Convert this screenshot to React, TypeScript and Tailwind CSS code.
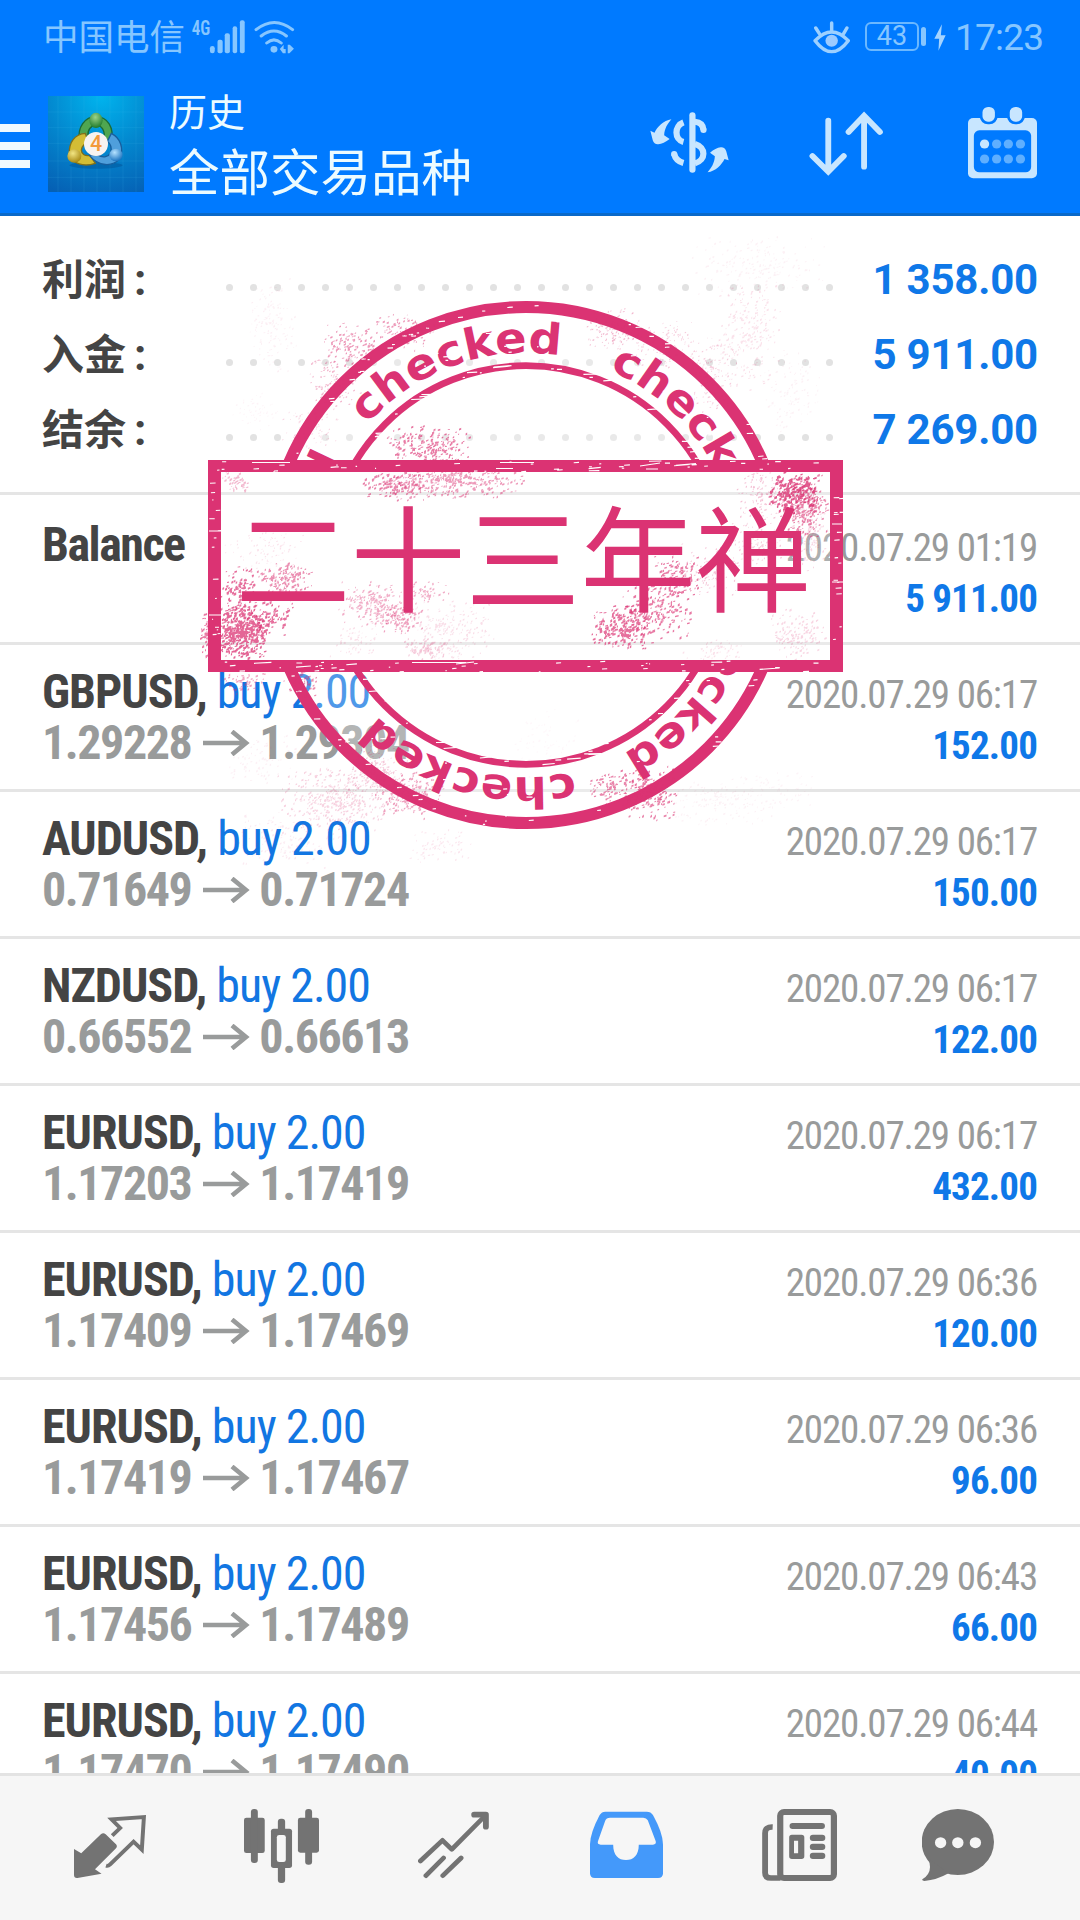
import React from "react";

const PINK = "#db3373";

const summary = [
  { label: "利润", value: "1 358.00" },
  { label: "入金", value: "5 911.00" },
  { label: "结余", value: "7 269.00" },
];

const deals = [
  { symbol: "GBPUSD", open: "1.29228", close: "1.29304", time: "2020.07.29 06:17", profit: "152.00" },
  { symbol: "AUDUSD", open: "0.71649", close: "0.71724", time: "2020.07.29 06:17", profit: "150.00" },
  { symbol: "NZDUSD", open: "0.66552", close: "0.66613", time: "2020.07.29 06:17", profit: "122.00" },
  { symbol: "EURUSD", open: "1.17203", close: "1.17419", time: "2020.07.29 06:17", profit: "432.00" },
  { symbol: "EURUSD", open: "1.17409", close: "1.17469", time: "2020.07.29 06:36", profit: "120.00" },
  { symbol: "EURUSD", open: "1.17419", close: "1.17467", time: "2020.07.29 06:36", profit: "96.00" },
  { symbol: "EURUSD", open: "1.17456", close: "1.17489", time: "2020.07.29 06:43", profit: "66.00" },
  { symbol: "EURUSD", open: "1.17470", close: "1.17490", time: "2020.07.29 06:44", profit: "40.00" },
];

// seeded so the stamp looks the same on every render
let seed = 7;
const rnd = () => {
  seed = (seed * 16807) % 2147483647;
  return seed / 2147483647;
};
const spread = () => rnd() + rnd() - 1;

// x, y, rx, ry, count, dot size, opacity
const clusters = [
  [350, 345, 28, 22, 130, 1.6, 0.5],
  [402, 332, 32, 20, 110, 1.5, 0.5],
  [335, 380, 28, 28, 130, 1.3, 0.35],
  [310, 425, 30, 30, 100, 1.2, 0.2],
  [272, 325, 26, 50, 150, 1.3, 0.08],
  [255, 410, 24, 24, 60, 1.2, 0.06],
  [612, 330, 28, 22, 150, 1.2, 0.35],
  [665, 345, 40, 28, 120, 1.2, 0.25],
  [712, 375, 28, 40, 150, 1.2, 0.25],
  [748, 335, 34, 56, 240, 1.5, 0.15],
  [760, 265, 70, 34, 200, 1.4, 0.07],
  [790, 390, 34, 44, 110, 1.4, 0.07],
  [430, 447, 46, 22, 230, 1.7, 0.65],
  [448, 480, 78, 22, 420, 1.7, 0.5],
  [392, 484, 34, 18, 100, 1.9, 0.6],
  [236, 482, 17, 14, 60, 1.5, 0.35],
  [792, 490, 28, 26, 190, 2.2, 0.8],
  [804, 507, 25, 34, 260, 1.7, 0.6],
  [760, 495, 26, 34, 140, 1.3, 0.3],
  [808, 535, 21, 40, 120, 1.5, 0.2],
  [755, 545, 30, 24, 100, 1.3, 0.25],
  [241, 632, 32, 28, 480, 2, 0.75],
  [206, 634, 7, 24, 50, 1.7, 0.65],
  [238, 588, 20, 24, 100, 1.8, 0.7],
  [286, 580, 30, 20, 150, 1.8, 0.55],
  [265, 548, 42, 22, 90, 1.2, 0.15],
  [270, 615, 24, 20, 80, 2, 0.7],
  [375, 604, 38, 24, 220, 1.6, 0.4],
  [400, 618, 24, 20, 110, 1.7, 0.45],
  [425, 592, 26, 14, 60, 1.5, 0.4],
  [450, 630, 46, 32, 230, 1.4, 0.16],
  [425, 650, 22, 14, 80, 1.7, 0.25],
  [355, 642, 26, 20, 60, 1.4, 0.15],
  [620, 627, 32, 26, 200, 2, 0.7],
  [655, 612, 36, 28, 200, 1.9, 0.65],
  [676, 578, 26, 24, 110, 1.9, 0.65],
  [712, 570, 34, 28, 110, 1.3, 0.3],
  [798, 634, 31, 28, 150, 1.6, 0.2],
  [715, 650, 34, 14, 60, 1.4, 0.15],
  [245, 681, 26, 14, 50, 1.7, 0.45],
  [303, 682, 20, 20, 60, 1.8, 0.55],
  [335, 800, 62, 34, 420, 1.5, 0.22],
  [375, 770, 34, 32, 200, 1.3, 0.28],
  [410, 795, 36, 24, 220, 1.6, 0.45],
  [290, 840, 60, 30, 130, 1.5, 0.1],
  [440, 845, 34, 18, 70, 1.5, 0.12],
  [260, 760, 40, 30, 80, 1.5, 0.08],
  [612, 788, 26, 18, 90, 1.7, 0.6],
  [648, 788, 30, 24, 130, 1.7, 0.65],
  [648, 806, 30, 18, 60, 1.9, 0.6],
  [720, 800, 60, 28, 160, 1.4, 0.07],
  [780, 790, 40, 20, 60, 1.4, 0.06],
  [545, 745, 40, 40, 80, 1.4, 0.04],
].map(([cx, cy, rx, ry, count, size, opacity]) => {
  let d = "";
  for (let i = 0; i < count; i++) {
    const w = size * (0.5 + rnd());
    const h = size * (0.5 + rnd());
    const x = cx + spread() * rx;
    const y = cy + spread() * ry;
    d += `M${x.toFixed(1)} ${y.toFixed(1)}l${w.toFixed(1)} ${(-h / 2).toFixed(1)}v${h.toFixed(1)}l${(-w).toFixed(1)} ${(h / 3).toFixed(1)}z`;
  }
  return { d, opacity };
});

const dash = (x: number, y: number, w: number) =>
  `M${x.toFixed(1)} ${y.toFixed(1)}l${w.toFixed(1)} ${(-w * 0.1 * rnd()).toFixed(1)}`;

let ringScratches = "";
for (let i = 0; i < 210; i++) {
  const a = rnd() * Math.PI * 2;
  const r = i % 3 === 0 ? 199 + spread() * 4 : i % 3 === 1 ? 258 + spread() * 7 : 228 + spread() * 18;
  ringScratches += dash(526 + Math.cos(a) * r, 565 + Math.sin(a) * r, i % 6 === 0 ? 10 + rnd() * 8 : 1.5 + rnd() * 5);
}

let frameScratches = "";
for (let i = 0; i < 90; i++) {
  const top = i % 2 === 0;
  frameScratches += dash(215 + rnd() * 610, (top ? 461 : 661) + rnd() * 11, i % 9 === 0 ? 10 + rnd() * 12 : 1 + rnd() * 5);
}
for (let i = 0; i < 30; i++) {
  frameScratches += dash((i % 2 ? 209 : 831) + rnd() * 9, 475 + rnd() * 180, 1 + rnd() * 5);
}
frameScratches += "M252 462.5h38M500 462.5h34M496 468.5h17M640 466l20 -3M646 469h12M412 662.5h54M456 664l18 -2M209 531h12M209 615h12M832 524h10M832 582h11";

const Stamp: React.FC = () => (
  <svg className="absolute left-0 top-0 pointer-events-none" width="1080" height="1920" viewBox="0 0 1080 1920">
    <defs>
      <clipPath id="outside-frame">
        <path d="M0 0H1080V461H0zM0 671H1080V1920H0z" />
      </clipPath>
      <path id="ring-text" d="M526 353a212 212 0 0 1 0 424a212 212 0 0 1 0 -424" />
    </defs>
    <g clipPath="url(#outside-frame)">
      <circle cx="526" cy="565" r="258" fill="#fff" fillOpacity="0.26" stroke={PINK} strokeWidth="12" />
      <circle cx="526" cy="565" r="199.3" fill="none" stroke={PINK} strokeWidth="6.8" />
      {[-48.5, 23, 95, 167, 242].map((angle) => (
        <text
          key={angle}
          transform={`rotate(${angle} 526 565)`}
          fill={PINK}
          fontFamily="'DejaVu Sans', sans-serif"
          fontWeight="700"
          fontSize="43"
        >
          <textPath href="#ring-text" textLength="214" lengthAdjust="spacingAndGlyphs">checked</textPath>
        </text>
      ))}
      <path d={ringScratches} stroke="#fff" strokeWidth="1.2" fill="none" />
    </g>
    <rect x="214.5" y="466" width="622" height="200" fill="#fff" fillOpacity="0.2" />
    {clusters.map((c, i) => (
      <path key={i} d={c.d} fill={PINK} fillOpacity={c.opacity} />
    ))}
    <path d="M208 460H843V672H208zM221 472V660H830V472z" fill={PINK} fillRule="evenodd" />
    <path d={frameScratches} stroke="#fff" strokeWidth="1.1" fill="none" />
    <text x="235.5" y="603" fill={PINK} fontFamily="'Noto Sans CJK SC', sans-serif" fontSize="115">二十三年禅</text>
  </svg>
);

const StatusBar: React.FC = () => (
  <div className="flex h-[75px] items-center text-[#86c6ff]">
    <span className="ml-[43px] -mt-[5px] text-[35.5px] leading-none font-['Noto_Sans_CJK_SC',sans-serif]">中国电信</span>
    <svg className="ml-[6px] -mt-[3px]" width="105" height="37" viewBox="555 50 305 111" preserveAspectRatio="none" fill="currentColor">
      <text x="557" y="102" fontFamily="'Roboto Condensed', sans-serif" fontWeight="600" fontSize="62" textLength="54" lengthAdjust="spacingAndGlyphs">4G</text>
      <rect x="610" y="134" width="14" height="22" rx="7" />
      <rect x="632" y="115" width="15" height="41" rx="6" />
      <rect x="653" y="96" width="15" height="60" rx="6" />
      <rect x="676" y="75" width="13" height="81" rx="6" />
      <rect x="697" y="57" width="14" height="99" rx="6" />
      <circle cx="796" cy="144" r="10" />
      <path d="M744 85Q797 42 850 85M759 104Q796 74 832 104M775 125Q796 106 817 125" fill="none" stroke="currentColor" strokeWidth="9" strokeLinecap="round" />
      <path d="M813 143L824 130V143H830V156H822zM836 130H842L854 142L841 156H836z" />
    </svg>
    <svg className="ml-auto -mt-[2px]" width="37" height="34" viewBox="791 58 107 102" preserveAspectRatio="none">
      <path d="M797 120Q845 68 893 120Q845 186 797 120zM845 67V90M799 82L809 98M889 82L880 98" fill="none" stroke="#9dd0ff" strokeWidth="10" strokeLinecap="round" strokeLinejoin="round" />
      <circle cx="845" cy="120" r="18" fill="#9dcbff" />
    </svg>
    <div className="ml-[15px] -mt-[2px] flex h-[29px] w-[54px] items-center justify-center rounded-md border-2 border-[#6bb8ff] text-[27px] leading-none font-['Roboto',sans-serif]">43</div>
    <div className="ml-[2px] -mt-[2px] h-[19px] w-[5px] rounded-sm bg-[#86c6ff]" />
    <svg className="ml-[8px] -mt-[1px]" width="12" height="27" viewBox="1142 72 35 79" preserveAspectRatio="none" fill="#a5d4ff">
      <path d="M1165 73L1143 115H1157L1155 150L1176 105H1162z" />
    </svg>
    <span className="ml-[9px] mr-[36px] w-[89px] text-[37px] leading-none tracking-[-0.8px] font-['Roboto',sans-serif]">17:23</span>
  </div>
);

const AppIcon: React.FC = () => (
  <svg className="ml-[18px]" width="96" height="96" viewBox="24 18 288 288">
    <defs>
      <radialGradient id="icon-bg" cx="0.55" cy="0" r="1.1">
        <stop offset="0" stopColor="#00b4ee" />
        <stop offset="0.5" stopColor="#0388cf" />
        <stop offset="1" stopColor="#0560b4" />
      </radialGradient>
      <radialGradient id="icon-green" cx="0.45" cy="0.3" r="0.7">
        <stop offset="0" stopColor="#9bd48a" />
        <stop offset="1" stopColor="#1f7a2c" />
      </radialGradient>
      <radialGradient id="icon-yellow" cx="0.4" cy="0.3" r="0.7">
        <stop offset="0" stopColor="#f2e583" />
        <stop offset="1" stopColor="#a88a14" />
      </radialGradient>
      <radialGradient id="icon-blue" cx="0.4" cy="0.3" r="0.7">
        <stop offset="0" stopColor="#b5e2ff" />
        <stop offset="1" stopColor="#1c74c0" />
      </radialGradient>
    </defs>
    <rect x="24" y="18" width="288" height="288" fill="url(#icon-bg)" />
    <path d="M54 18V306M93 18V306M132 18V306M171 18V306M210 18V306M249 18V306M288 18V306M24 66H312M24 113H312M24 160H312M24 213H312M24 262H312" stroke="#4cc3ef" strokeOpacity="0.2" strokeWidth="2" />
    <ellipse cx="168" cy="226" rx="80" ry="10" fill="#034a8c" opacity="0.4" />
    <path d="M118 152C112 112 134 80 168 80C202 80 224 112 214 158L192 150C196 122 186 106 168 106C152 106 142 120 144 140z" fill="#4fa650" stroke="#1b6b35" strokeWidth="4" />
    <path d="M136 130C104 132 86 158 88 192C96 222 132 232 166 220L150 196C134 200 124 190 124 180C126 168 134 160 146 160z" fill="#d3bd35" stroke="#80701a" strokeWidth="4" />
    <path d="M214 130C242 144 252 176 240 206C216 232 176 230 148 196L172 194C190 206 206 200 212 188C216 174 212 162 202 154z" fill="#4f9fdc" stroke="#175e9e" strokeWidth="4" />
    <ellipse cx="168" cy="91" rx="20" ry="23" fill="url(#icon-green)" />
    <ellipse cx="103" cy="198" rx="21" ry="20" fill="url(#icon-yellow)" />
    <ellipse cx="228" cy="195" rx="20" ry="19" fill="url(#icon-blue)" />
    <circle cx="168" cy="162" r="36" fill="#f7f3f1" />
    <text x="168" y="184" textAnchor="middle" fontFamily="'Roboto', sans-serif" fontWeight="500" fontSize="64" fill="#f39a3c">4</text>
  </svg>
);

const TitleBar: React.FC = () => (
  <div className="flex h-[138px] items-center">
    <div className="mt-1 flex w-[30px] flex-col gap-[10px]">
      <div className="h-2 bg-[#f0f9ff]" />
      <div className="h-2 bg-[#f0f9ff]" />
      <div className="h-2 bg-[#f0f9ff]" />
    </div>
    <AppIcon />
    <div className="ml-[25px] -mt-[1px] text-[#ecfbff] font-['Noto_Sans_CJK_SC',sans-serif]">
      <p className="text-[38px] leading-[51px]">历史</p>
      <h1 className="text-[50.5px] leading-[69px]">全部交易品种</h1>
    </div>
    <svg className="ml-auto -mt-[3px]" width="79" height="72" viewBox="321 320 229 216" preserveAspectRatio="none" fill="none" stroke="#c8e6ff" strokeWidth="18">
      <g fill="#c8e6ff" stroke="none">
        <path d="M383 357C360 360 342 380 334 397L322 391L329 420Q333 433 345 432Q360 430 378 416L362 405C363 385 372 370 383 357z" />
        <path d="M488 516C511 513 529 493 537 476L549 480L542 453Q538 440 526 441Q511 443 495 457L509 468C508 488 499 503 488 516z" />
        <rect x="435" y="336" width="18" height="181" rx="9" />
      </g>
      <path d="M418 366C391 376 391 418 418 425M451 431C484 440 484 480 451 489M418 488Q396 482 391 461M451 364Q474 366 476 388" />
      <circle cx="391" cy="461" r="9" fill="#c8e6ff" stroke="none" />
      <circle cx="476" cy="389" r="9" fill="#c8e6ff" stroke="none" />
    </svg>
    <svg className="ml-[80px] -mt-[3px]" width="74" height="72" viewBox="781 320 215 216" preserveAspectRatio="none" fill="none" stroke="#c8e6ff" strokeWidth="17" strokeLinecap="round">
      <path d="M837 361V513M791 467L837 514L882 467M941 499V347M896 395L941 346L987 395" />
    </svg>
    <svg className="ml-[85px] mr-[43px] -mt-[3px]" width="69" height="72" viewBox="1243 320 200 216" preserveAspectRatio="none" fill="#c8e6ff">
      <rect x="1243" y="353" width="200" height="181" rx="15" />
      <rect x="1260" y="390" width="166" height="126" rx="16" fill="#007aff" />
      <rect x="1281" y="316" width="44" height="52" rx="20" stroke="#007aff" strokeWidth="8" />
      <rect x="1360" y="316" width="44" height="52" rx="20" stroke="#007aff" strokeWidth="8" />
      <circle cx="1291" cy="431" r="13.5" />
      <g fill="#5fafff">
        <circle cx="1326" cy="431" r="13.5" />
        <circle cx="1360" cy="431" r="13.5" />
        <circle cx="1395" cy="431" r="13.5" />
        <circle cx="1291" cy="476" r="13.5" />
        <circle cx="1326" cy="476" r="13.5" />
        <circle cx="1360" cy="476" r="13.5" />
        <circle cx="1395" cy="476" r="13.5" />
      </g>
    </svg>
  </div>
);

const Summary: React.FC = () => (
  <ul className="border-b-[3px] border-[#e5e5e5] pt-[26px] pb-[25px] h-[279px]">
    {summary.map((item) => (
      <li key={item.label} className="flex h-[75px] items-center pl-[42px] pr-[42px] font-bold">
        <span className="-mt-[5px] w-[84px] text-[42px] leading-none text-[#444] font-['Noto_Sans_CJK_SC',sans-serif]">{item.label}</span>
        <span className="ml-[8px] w-[92px] text-[44px] leading-none text-[#444] font-['Roboto',sans-serif]">:</span>
        <span className="mt-[15px] flex gap-[17px]">
          {new Array(26).fill(1).map((_, idx) => (
            <i key={idx} className="h-[7px] w-[7px] rounded-full bg-[#e2e2e2]" />
          ))}
        </span>
        <span className="ml-auto text-[42px] leading-[75px] tracking-[-0.2px] text-[#0f78e8] font-['Roboto',sans-serif]">{item.value}</span>
      </li>
    ))}
  </ul>
);

const Arrow: React.FC = () => (
  <svg className="ml-[12px] mr-[9px] shrink-0" width="47" height="26" viewBox="0 0 47 26" fill="none" stroke="#999b9b" strokeWidth="4.6">
    <path d="M0 13H43M29 1.5L43 13L29 24.5" />
  </svg>
);

const History: React.FC = () => (
  <ul className="min-h-0 flex-1 overflow-hidden text-[48px] leading-[51px] font-['Roboto_Condensed','Roboto',sans-serif]">
    <li className="flex h-[150px] justify-between border-b-[3px] border-[#e5e5e5] pt-[24px] pl-[42px] pr-[43px]">
      <span className="font-bold text-[#444] tracking-[-1.5px]">Balance</span>
      <div className="pt-[4px] text-right text-[39px]">
        <p className="text-[#999b9b] tracking-[-1.15px]">2020.07.29 01:19</p>
        <p className="font-bold text-[#0f78e8] tracking-[-0.85px]">5 911.00</p>
      </div>
    </li>
    {deals.map((deal, idx) => (
      <li key={idx} className="flex h-[147px] justify-between border-b-[3px] border-[#e5e5e5] pt-[21px] pl-[42px] pr-[43px]">
        <div>
          <p className="tracking-[-1px]">
            <span className="font-bold text-[#444]">{deal.symbol},</span>{" "}
            <span className="text-[#1276e2]">buy 2.00</span>
          </p>
          <div className="flex items-center font-bold text-[#999b9b] tracking-[-1.45px]">
            <span>{deal.open}</span>
            <Arrow />
            <span>{deal.close}</span>
          </div>
        </div>
        <div className="pt-[4px] text-right text-[39px]">
          <p className="text-[#999b9b] tracking-[-1.15px]">{deal.time}</p>
          <p className="font-bold text-[#0f78e8] tracking-[-0.85px]">{deal.profit}</p>
        </div>
      </li>
    ))}
  </ul>
);

const NavBar: React.FC = () => (
  <nav className="flex h-[147px] shrink-0 border-t-[3px] border-[#e3e3e3] bg-[#f6f6f6] pt-[33px] pl-[74px] text-[#737373]">
    <svg width="73" height="74" viewBox="215 387 212 222" preserveAspectRatio="none" fill="currentColor">
      <path d="M215 507L236 520L293 463Q300 456 307 463L337 493Q342 499 337 505L276 568L295 581L225 594Q215 595 215 585z" />
      <path d="M326 467L349 444L324 418L418 411L412 509L388 485L320 553Q314 559 308 557" fill="none" stroke="currentColor" strokeWidth="11.5" />
    </svg>
    <svg className="ml-[97px]" width="75" height="74" viewBox="709 387 217 222" preserveAspectRatio="none" fill="currentColor">
      <rect x="709" y="413" width="60" height="106" rx="7" />
      <rect x="729" y="387" width="20" height="162" rx="9" />
      <rect x="865" y="413" width="61" height="105" rx="7" />
      <rect x="886" y="387" width="20" height="167" rx="9" />
      <rect x="807" y="416" width="21" height="50" rx="9" />
      <rect x="807" y="550" width="21" height="59" rx="9" />
      <rect x="787" y="446" width="61" height="118" rx="8" />
      <rect x="804" y="465" width="26" height="81" rx="7" fill="#f6f6f6" />
    </svg>
    <svg className="ml-[99px]" width="71" height="74" viewBox="1214 387 206 222" preserveAspectRatio="none" fill="none" stroke="currentColor" strokeWidth="14" strokeLinecap="round" strokeLinejoin="round">
      <path d="M1221 543L1285 481L1312 508L1408 408M1288 534L1237 587M1339 534L1286 587" />
      <path d="M1377 404H1411V440" strokeWidth="17" />
    </svg>
    <svg className="ml-[101px]" width="73" height="74" viewBox="146 387 211 222" preserveAspectRatio="none">
      <path d="M190 395H310Q322 395 328 405Q357 460 357 493V580Q357 594 343 594H160Q146 594 146 580V493Q146 460 174 405Q180 395 190 395z" fill="#4499fa" />
      <path d="M204 413H300Q309 413 313 421L336 484Q338 494 328 494H287C287 525 272 540 250 540C228 540 213 525 213 494H177Q166 494 169 484L190 422Q193 413 204 413z" fill="#f6f6f6" />
    </svg>
    <svg className="ml-[99px]" width="75" height="74" viewBox="646 387 218 222" preserveAspectRatio="none" fill="currentColor">
      <rect x="699" y="396" width="156" height="198" rx="11" fill="none" stroke="currentColor" strokeWidth="18" />
      <path d="M677 441Q655 440 655 460V578Q655 594 672 594H700" fill="none" stroke="currentColor" strokeWidth="17" />
      <rect x="726" y="429" width="103" height="18" rx="9" />
      <path d="M733 464H761Q769 464 769 472V529Q769 537 761 537H733Q725 537 725 529V472Q725 464 733 464zM739 482V520H751V482z" fillRule="evenodd" />
      <rect x="785" y="464" width="45" height="19" rx="9" />
      <rect x="785" y="491" width="45" height="19" rx="9" />
      <rect x="785" y="518" width="45" height="19" rx="9" />
    </svg>
    <svg className="ml-[85px]" width="72" height="74" viewBox="1109 387 209 222" preserveAspectRatio="none" fill="currentColor">
      <ellipse cx="1213" cy="486" rx="105" ry="99" />
      <path d="M1126 535Q1144 575 1110 598Q1108 602 1116 603Q1152 600 1186 580z" />
      <g fill="#f6f6f6">
        <circle cx="1163" cy="488" r="16.5" />
        <circle cx="1213" cy="488" r="16.5" />
        <circle cx="1264" cy="488" r="16.5" />
      </g>
    </svg>
  </nav>
);

const App: React.FC = () => {
  return (
    <div className="relative flex h-[1920px] w-[1080px] flex-col overflow-hidden bg-white">
      <header className="h-[216px] shrink-0 border-b-[3px] border-[#0a69c9] bg-[#007aff]">
        <StatusBar />
        <TitleBar />
      </header>
      <Summary />
      <History />
      <NavBar />
      <Stamp />
    </div>
  );
};

export default App;
